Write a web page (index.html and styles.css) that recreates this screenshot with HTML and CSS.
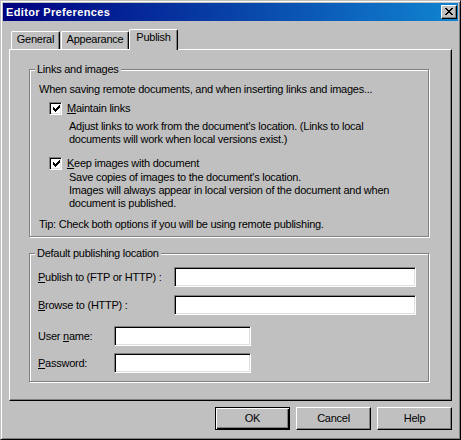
FILE: index.html
```html
<!DOCTYPE html>
<html>
<head>
<meta charset="utf-8">
<title>Editor Preferences</title>
<link rel="stylesheet" href="styles.css">
</head>
<body>
<div class="window">
  <div class="titlebar">
    <span class="title">Editor Preferences</span>
    <div class="close">
      <svg width="8" height="7" viewBox="0 0 8 7" shape-rendering="crispEdges"><path d="M0 0h2v1h-2z M6 0h2v1h-2z M1 1h2v1h-2z M5 1h2v1h-2z M2 2h4v1h-4z M3 3h2v1h-2z M2 4h4v1h-4z M1 5h2v1h-2z M5 5h2v1h-2z M0 6h2v1h-2z M6 6h2v1h-2z" fill="#000"/></svg>
    </div>
  </div>
  <div class="body">
    <div class="tabs">
      <div class="tab tab-general">General</div>
      <div class="tab tab-appearance">Appearance</div>
      <div class="tab tab-active">Publish</div>
    </div>
    <div class="panel">
      <div class="group group-links">
        <div class="legend">Links and images</div>
        <p class="intro">When saving remote documents, and when inserting links and images...</p>
        <div class="check-row check-first">
          <span class="checkbox"><svg width="9" height="9" viewBox="0 0 9 9" shape-rendering="crispEdges"><path d="M1 2h1v3h-1z M2 3h1v3h-1z M3 4h1v3h-1z M4 3h1v3h-1z M5 2h1v3h-1z M6 1h1v3h-1z M7 0h1v3h-1z" fill="#000"/></svg></span>
          <span><u>M</u>aintain links</span>
        </div>
        <p class="desc desc-first">Adjust links to work from the document's location. (Links to local<br>documents will work when local versions exist.)</p>
        <div class="check-row check-second">
          <span class="checkbox"><svg width="9" height="9" viewBox="0 0 9 9" shape-rendering="crispEdges"><path d="M1 2h1v3h-1z M2 3h1v3h-1z M3 4h1v3h-1z M4 3h1v3h-1z M5 2h1v3h-1z M6 1h1v3h-1z M7 0h1v3h-1z" fill="#000"/></svg></span>
          <span><u>K</u>eep images with document</span>
        </div>
        <p class="desc desc-second">Save copies of images to the document's location.<br>Images will always appear in local version of the document and when<br>document is published.</p>
        <p class="tip">Tip: Check both options if you will be using remote publishing.</p>
      </div>
      <div class="group group-location">
        <div class="legend">Default publishing location</div>
        <div class="field-row row-publish">
          <span class="field-label label-wide"><u>P</u>ublish to (FTP or HTTP) :</span>
          <span class="field field-wide"></span>
        </div>
        <div class="field-row row-browse">
          <span class="field-label label-wide"><u>B</u>rowse to (HTTP) :</span>
          <span class="field field-wide"></span>
        </div>
        <div class="field-row row-user">
          <span class="field-label label-narrow">User <u>n</u>ame:</span>
          <span class="field field-narrow"></span>
        </div>
        <div class="field-row row-pass">
          <span class="field-label label-narrow"><u>P</u>assword:</span>
          <span class="field field-narrow"></span>
        </div>
      </div>
    </div>
    <div class="buttons">
      <div class="btn btn-default">OK</div>
      <div class="btn">Cancel</div>
      <div class="btn">Help</div>
    </div>
  </div>
</div>
</body>
</html>
```
FILE: styles.css
```css
* { box-sizing: border-box; }
html, body { margin: 0; padding: 0; background: #c0c0c0; }
body {
  font-family: "Liberation Sans", Arial, sans-serif;
  font-size: 11px;
  line-height: 13px;
  letter-spacing: -0.25px;
  color: #000;
}
p { margin: 0; }
u { text-decoration: underline; text-underline-offset: 1px; }

.window {
  width: 461px;
  height: 440px;
  background: #c0c0c0;
  border: 1px solid;
  border-color: #c0c0c0 #000 #000 #c0c0c0;
  box-shadow: inset 1px 1px 0 #fff, inset -1px -1px 0 #808080;
  padding: 2px;
}

.titlebar {
  height: 18px;
  background: linear-gradient(to right, #000080, #1084d0);
  display: flex;
  align-items: center;
  justify-content: space-between;
}
.title {
  color: #fff;
  font-weight: bold;
  font-size: 11px;
  letter-spacing: 0.35px;
  padding-left: 3px;
}
.close {
  width: 16px;
  height: 14px;
  margin-right: 1px;
  background: #c0c0c0;
  border: 1px solid;
  border-color: #fff #000 #000 #fff;
  box-shadow: inset -1px -1px 0 #808080;
  display: flex;
  padding: 2px 0 0 3px;
}
.close svg { display: block; }

.body { padding: 0 6px; }

.tabs {
  height: 28px;
  display: flex;
  align-items: flex-end;
}
.tab {
  height: 18px;
  border-top: 1px solid #fff;
  border-left: 1px solid #fff;
  border-right: 1px solid #000;
  border-top-left-radius: 2px;
  border-top-right-radius: 2px;
  box-shadow: inset -1px 0 0 #808080;
  padding-top: 1px;
  text-align: center;
  background: #c0c0c0;
}
.tab-general { width: 49px; margin-left: 2px; }
.tab-appearance { width: 68px; margin-left: 1px; }
.tab-active {
  width: 49px;
  height: 21px;
  margin-bottom: -1px;
  position: relative;
  z-index: 1;
}

.panel {
  height: 352px;
  border: 1px solid;
  border-color: #fff #000 #000 #fff;
  box-shadow: inset -1px -1px 0 #808080;
  padding-top: 19px;
  padding-left: 19px;
}

.group {
  width: 400px;
  border: 1px solid #808080;
  box-shadow: 1px 1px 0 #fff, inset 1px 1px 0 #fff;
}
.legend {
  width: fit-content;
  margin: -7px 0 0 5px;
  padding: 0 2px;
  background: #c0c0c0;
}

.group-links { padding-bottom: 5px; }
.intro { margin-top: 7px; padding-left: 9px; white-space: nowrap; }
.check-row {
  display: flex;
  align-items: center;
  gap: 5px;
  height: 13px;
  margin-left: 19px;
}
.check-first { margin-top: 6px; }
.check-second { margin-top: 11px; }
.checkbox {
  width: 13px;
  height: 13px;
  flex: none;
  background: #fff;
  border: 1px solid;
  border-color: #808080 #fff #fff #808080;
  box-shadow: inset 1px 1px 0 #000, inset -1px -1px 0 #dfdfdf;
  padding: 2px 0 0 2px;
}
.checkbox svg { display: block; }
.desc { margin-left: 39px; white-space: nowrap; }
.desc-first { margin-top: 5px; }
.desc-second { margin-top: 1px; }
.tip { margin-top: 8px; padding-left: 9px; white-space: nowrap; }

.group-location { margin-top: 16px; padding-bottom: 8px; }
.field-row {
  display: flex;
  align-items: center;
  height: 20px;
  padding-left: 8px;
}
.row-publish { margin-top: 7px; }
.row-browse { margin-top: 8px; }
.row-user { margin-top: 11px; }
.row-pass { margin-top: 7px; }
.field-label { white-space: nowrap; }
.label-wide { width: 136px; }
.label-narrow { width: 76px; }
.field {
  height: 20px;
  background: #fff;
  border: 1px solid;
  border-color: #808080 #fff #fff #808080;
  box-shadow: inset 1px 1px 0 #000, inset -1px -1px 0 #dfdfdf;
}
.field-wide { width: 242px; }
.field-narrow { width: 137px; }

.buttons {
  display: flex;
  justify-content: flex-end;
  gap: 6px;
  margin-top: 6px;
}
.btn {
  width: 75px;
  height: 23px;
  border: 1px solid;
  border-color: #fff #000 #000 #fff;
  box-shadow: inset -1px -1px 0 #808080;
  display: flex;
  align-items: center;
  justify-content: center;
}
.btn-default {
  border-color: #000;
  box-shadow: inset 1px 1px 0 #fff, inset -1px -1px 0 #000, inset -2px -2px 0 #808080;
}
```
